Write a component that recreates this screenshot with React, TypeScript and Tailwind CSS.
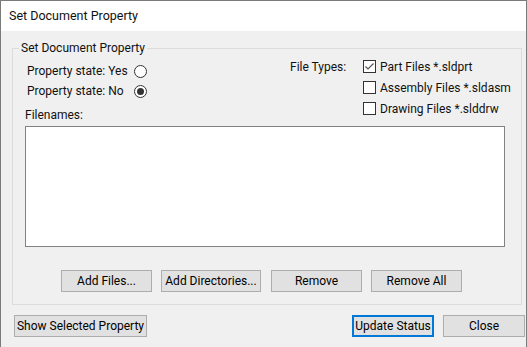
import React, { useState } from 'react';

const font = { fontFamily: 'Roboto, "Noto Sans", sans-serif' };

const Btn: React.FC<{ w: string; label: string; primary?: boolean }> = ({ w, label, primary }) => (
    <button
        className={
            primary
                ? `${w} h-[22px] bg-[#e1e1e1] border-2 border-[#0078d7] text-[12px] text-black leading-none whitespace-nowrap`
                : `${w} h-[22px] bg-[#e1e1e1] border border-[#adadad] text-[12px] text-black leading-none whitespace-nowrap`
        }
    >
        {label}
    </button>
);

const Radio: React.FC<{ checked: boolean; onClick: () => void }> = ({ checked, onClick }) => (
    <span
        onClick={onClick}
        className="w-[13px] h-[13px] rounded-full border border-[#333333] bg-white flex items-center justify-center"
    >
        {checked && <span className="w-[7px] h-[7px] rounded-full bg-[#333333]" />}
    </span>
);

const Check: React.FC<{ checked: boolean; onClick: () => void }> = ({ checked, onClick }) => (
    <span onClick={onClick} className="w-[13px] h-[13px] border border-[#333333] bg-white flex items-center justify-center">
        {checked && (
            <svg width="11" height="11" viewBox="0 0 11 11">
                <polyline points="1.5,5.5 4,8 9.5,2.5" fill="none" stroke="#555555" strokeWidth="1.2" />
            </svg>
        )}
    </span>
);

const App: React.FC = () => {
    const [state, setState] = useState<'yes' | 'no'>('no');
    const [types, setTypes] = useState({ part: true, asm: false, drw: false });

    return (
        <div style={font} className="w-[527px] h-[347px] bg-[#f0f0f0] border-t border-l border-r border-[#7a7a7a] flex flex-col text-[12px] text-[#111111] overflow-hidden whitespace-nowrap">
            <div className="h-[30px] bg-white flex items-center pl-[8px] text-[12.5px]">Set Document Property</div>

            <fieldset className="ml-[11px] mt-[9px] w-[506px] border border-[#dcdcdc] pl-[12px] pr-[10px] pb-[12px]">
                <legend className="-ml-[6px] px-[2px] h-[16px] leading-[16px]">Set Document Property</legend>
                <div className="flex">
                    <div className="w-[265px] mt-[5px] flex flex-col">
                        <div className="h-[20px] flex items-center">
                            <span className="w-[109px] pl-[2px]">Property state: Yes</span>
                            <Radio checked={state === 'yes'} onClick={() => setState('yes')} />
                        </div>
                        <div className="h-[20px] flex items-center">
                            <span className="w-[109px] pl-[2px]">Property state: No</span>
                            <Radio checked={state === 'no'} onClick={() => setState('no')} />
                        </div>
                        <div className="mt-[6px] h-[16px] leading-[16px]">Filenames:</div>
                    </div>
                    <div className="grid grid-cols-[73px_auto] auto-rows-[21px] items-center">
                        <span>File Types:</span>
                        <label className="flex items-center gap-[4px]">
                            <Check checked={types.part} onClick={() => setTypes({ ...types, part: !types.part })} />
                            Part Files *.sldprt
                        </label>
                        <span />
                        <label className="flex items-center gap-[4px]">
                            <Check checked={types.asm} onClick={() => setTypes({ ...types, asm: !types.asm })} />
                            Assembly Files *.sldasm
                        </label>
                        <span />
                        <label className="flex items-center gap-[4px]">
                            <Check checked={types.drw} onClick={() => setTypes({ ...types, drw: !types.drw })} />
                            Drawing Files *.slddrw
                        </label>
                    </div>
                </div>
                <div className="mt-[3px] w-[480px] h-[121px] bg-white border border-[#828282]" />
                <div className="mt-[23px] ml-[36px] flex">
                    <Btn w="w-[91px]" label="Add Files..." />
                    <div className="ml-[9px]"><Btn w="w-[100px]" label="Add Directories..." /></div>
                    <div className="ml-[10px]"><Btn w="w-[91px]" label="Remove" /></div>
                    <div className="ml-[9px]"><Btn w="w-[91px]" label="Remove All" /></div>
                </div>
            </fieldset>

            <div className="mt-[10px] pl-[13px] pr-[1px] flex">
                <Btn w="w-[133px]" label="Show Selected Property" />
                <div className="ml-auto"><Btn w="w-[82px]" label="Update Status" primary /></div>
                <div className="ml-[9px]"><Btn w="w-[82px]" label="Close" /></div>
            </div>
        </div>
    );
};

export default App;
